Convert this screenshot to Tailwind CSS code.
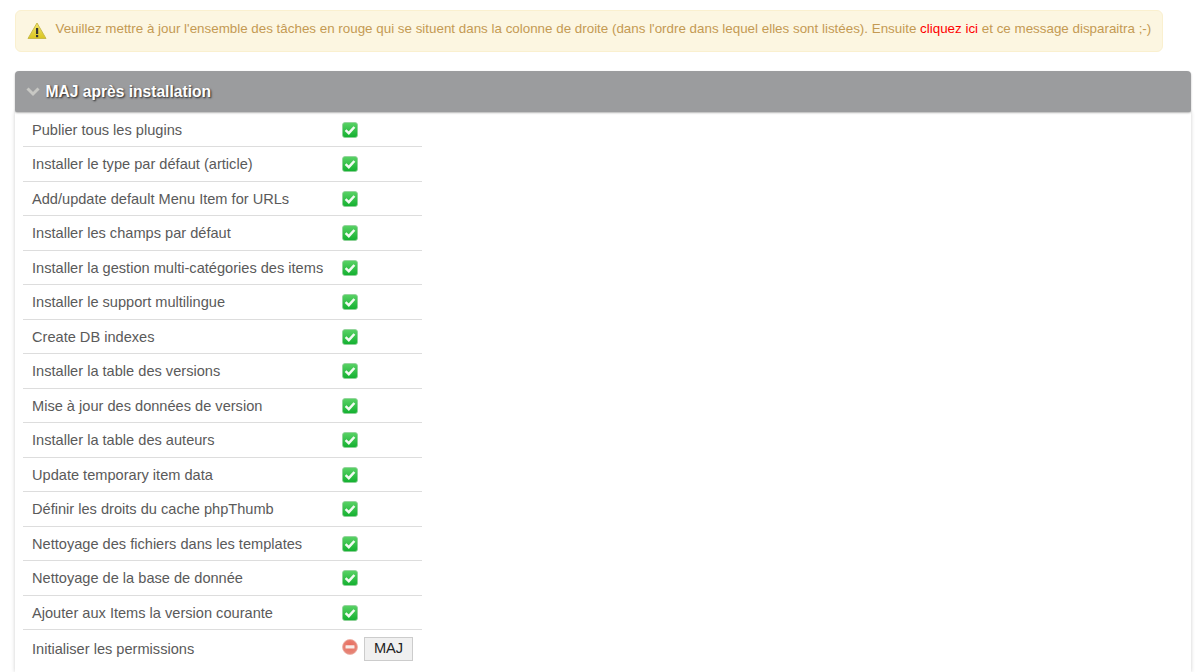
<!DOCTYPE html>
<html lang="fr">
<head>
<meta charset="utf-8">
<title>MAJ après installation</title>
<script src="https://cdn.jsdelivr.net/npm/@tailwindcss/browser@4"></script>
</head>
<body class="bg-white font-['Liberation_Sans',Arial,sans-serif] text-[14.6px] text-[#5a5a5a] h-[672px] overflow-hidden">
<div class="pt-[10px] pl-[14.5px] pr-[9px]">

    <!-- message -->
    <div class="w-[1148.5px] h-[42px] flex items-center pl-[11px] pb-[4px] bg-[#fcf6e1] border border-[#faf0cf] rounded-md text-[#c49a53] text-[13.38px]">
        <svg class="w-[20px] h-[18px] mr-[9px] mt-[4px] shrink-0" viewBox="0 0 20 18">
            <defs>
                <linearGradient id="warn" x1="0" y1="0" x2="0" y2="1">
                    <stop offset="0" stop-color="#f3e66a"/>
                    <stop offset="1" stop-color="#d9c51f"/>
                </linearGradient>
            </defs>
            <path d="M10 1 L19 16.5 H1 Z" fill="url(#warn)" stroke="#c9bb4a" stroke-width="1" stroke-linejoin="round"/>
            <rect x="9" y="6" width="2.2" height="6" fill="#333"/>
            <rect x="9" y="13" width="2.2" height="2.2" fill="#333"/>
        </svg>
        <span>Veuillez mettre à jour l'ensemble des tâches en rouge qui se situent dans la colonne de droite (dans l'ordre dans lequel elles sont listées). Ensuite <a href="#" class="text-[#f00]">cliquez ici</a> et ce message disparaitra ;-)</span>
    </div>

    <!-- panel -->
    <div class="mt-[19px] w-[1176.5px]">
        <div class="h-[41px] flex items-center pl-[11px] bg-[#9b9c9e] rounded-t-[4px] rounded-b-[2px] shadow-[0_1px_2px_rgba(0,0,0,0.3)] relative z-10">
            <svg class="w-[14px] h-[10px] mr-[6px] shrink-0" viewBox="0 0 14 10" fill="none">
                <path d="M1.5 1.5 L7 7 L12.5 1.5" stroke="#c8c8c4" stroke-width="3"/>
            </svg>
            <span class="text-white font-bold text-[15.6px] [text-shadow:1px_1px_2px_rgba(0,0,0,0.8)]">MAJ après installation</span>
        </div>
        <div class="bg-white shadow-[0_0_4px_rgba(0,0,0,0.2)] pl-[8.5px] h-[560px]">
            <table class="w-[399px] border-collapse">
                <tbody id="rows" class="[&>tr]:border-b [&>tr]:border-[#ddd] [&>tr:last-child]:border-b-0">
                    <!-- filled below -->
                </tbody>
            </table>
        </div>
    </div>
</div>

<template id="okIcon">
    <svg class="w-[16px] h-[16px] block" viewBox="0 0 16 16">
        <rect x="0.5" y="0.5" width="15" height="15" rx="2.5" fill="url(#okFill)" stroke="#8fcf98" stroke-width="0.8"/>
        <path d="M3.6 8.2 L6.8 11.2 L12.4 5" fill="none" stroke="#f2fbf2" stroke-width="2.5"/>
    </svg>
</template>

<svg class="absolute w-0 h-0">
    <defs>
        <linearGradient id="okFill" x1="0" y1="0" x2="0" y2="1">
            <stop offset="0" stop-color="#5ad266"/>
            <stop offset="1" stop-color="#12b02f"/>
        </linearGradient>
        <radialGradient id="noFill" cx="0.5" cy="0.4" r="0.6">
            <stop offset="0" stop-color="#ea6a5c"/>
            <stop offset="1" stop-color="#e58a7c"/>
        </radialGradient>
    </defs>
</svg>

<script>
const tasks = [
    'Publier tous les plugins',
    'Installer le type par défaut (article)',
    'Add/update default Menu Item for URLs',
    'Installer les champs par défaut',
    'Installer la gestion multi-catégories des items',
    'Installer le support multilingue',
    'Create DB indexes',
    'Installer la table des versions',
    'Mise à jour des données de version',
    'Installer la table des auteurs',
    'Update temporary item data',
    'Définir les droits du cache phpThumb',
    'Nettoyage des fichiers dans les templates',
    'Nettoyage de la base de donnée',
    'Ajouter aux Items la version courante'
];

const tbody = document.getElementById('rows');
const okIcon = document.getElementById('okIcon').innerHTML;

tasks.forEach(name => {
    const tr = document.createElement('tr');
    tr.innerHTML = `
        <td class="h-[34.5px] pl-[9px] pt-[3px] w-[319px] whitespace-nowrap">${name}</td>
        <td class="h-[34.5px] pt-[1px]">${okIcon}</td>
    `;
    tbody.appendChild(tr);
});

// derniere ligne, tache a lancer
const last = document.createElement('tr');
last.innerHTML = `
    <td class="h-[37px] pl-[9px] pt-[3px]">Initialiser les permissions</td>
    <td class="h-[37px]">
        <div class="flex items-start">
            <svg class="w-[16px] h-[16px] mt-[3px] mr-[6px] shrink-0" viewBox="0 0 16 16">
                <circle cx="8" cy="8" r="7.5" fill="url(#noFill)" stroke="#eeb0a6" stroke-width="0.8"/>
                <rect x="3.5" y="6.3" width="9" height="3.2" rx="0.5" fill="#f8ece8"/>
            </svg>
            <button class="w-[49px] h-[24px] mt-[1px] bg-[#f0f0f0] border border-[#ccc] text-[#222] text-[14.6px]">MAJ</button>
        </div>
    </td>
`;
tbody.appendChild(last);
</script>
</body>
</html>
